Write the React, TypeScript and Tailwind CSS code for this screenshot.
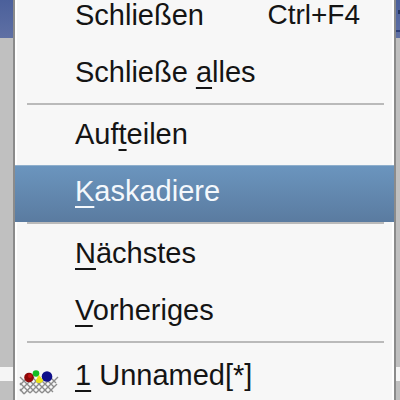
import type { ReactNode } from "react";
import clsx from "clsx";

function Key({ children }: { children: ReactNode }) {
    return (
        <span className="underline decoration-2 underline-offset-[5px] [text-decoration-skip-ink:none]">
            {children}
        </span>
    );
}

function BasketIcon() {
    return (
        <svg viewBox="0 0 40 28" className="w-10 h-7 mt-4" aria-hidden="true">
            <g fill="none" stroke="#8c8c8c" strokeWidth="1.4">
                <path d="M1 8L17 24M7 8L23 24M13 8L29 24M19 8L34 23M25 8L35 18M31 8L37 14M1 14L11 24M1 20L5 25" />
                <path d="M39 8L23 24M33 8L17 24M27 8L11 24M21 8L5 25M15 8L1 22M9 8L1 16M38 15L29 24" />
            </g>
            <circle cx="10" cy="8.5" r="4.8" fill="#8f0808" />
            <circle cx="11" cy="7" r="2" fill="#c51515" />
            <circle cx="28" cy="7.5" r="5.3" fill="#10108a" />
            <circle cx="17" cy="4.5" r="3.3" fill="#14bd22" />
            <path d="M20 6L24 11Q24 14 20 14Q16 14 17 11Z" fill="#e9e315" />
        </svg>
    );
}

interface ItemProps {
    children: ReactNode;
    shortcut?: string;
    icon?: ReactNode;
    active?: boolean;
    first?: boolean;
}

function Item({ children, shortcut, icon, active, first }: ItemProps) {
    return (
        <button
            type="button"
            role="menuitem"
            className={clsx(
                "flex w-full items-center pr-8 text-left whitespace-pre",
                first ? "h-[46px] pb-4" : "pb-[5px]",
                !first && (icon ? "h-[63px]" : "h-[57px]"),
                active
                    ? "border-t border-[#8fafcc] bg-linear-to-b from-[#6b95be] to-[#5a7ba0] text-[#f4f8fc]"
                    : "border-x-2 border-white text-[#141414]"
            )}
        >
            <span className={clsx("flex shrink-0", active ? "w-[60px] pl-1" : "w-[58px] pl-[2px]")}>{icon}</span>
            <span className="flex-1">{children}</span>
            {shortcut && <span className="text-[28px]">{shortcut}</span>}
        </button>
    );
}

function Separator() {
    return (
        <div role="separator" className="h-[5px] border-x-2 border-white pl-[10px] pr-2">
            <div className="h-[2px] bg-[#bababa]" />
        </div>
    );
}

export default function App() {
    return (
        <div className="relative flex h-screen flex-col overflow-hidden bg-[#c0c0c0] font-['Liberation_Sans',Arial,sans-serif] text-[29px] leading-none">
            {/* Window behind the menu */}
            <div className="flex h-[38px] shrink-0 flex-col items-end justify-between bg-linear-to-b from-[#4b609b] to-[#5f70a4] pt-[10px] pb-[6px]">
                <div className="h-1 w-[2px] bg-[#26365f]" />
                <div className="h-[2px] w-1 bg-[#2c3e78]" />
            </div>
            <div className="flex-1" />
            <div className="h-[14px] shrink-0 bg-[#f5f5f5]" />
            <div className="h-[19px] shrink-0" />

            <div role="menu" className="absolute top-0 left-[13px] right-1 border-x-2 border-[#8b8b8b] bg-[#f7f7f7]">
                <Item first shortcut="Ctrl+F4">Schließen</Item>
                <Item>Schließe <Key>a</Key>lles</Item>
                <Separator />
                <Item>Auf<Key>t</Key>eilen</Item>
                <Item active><Key>K</Key>askadiere</Item>
                <Separator />
                <Item><Key>N</Key>ächstes</Item>
                <Item><Key>V</Key>orheriges</Item>
                <Separator />
                <Item icon={<BasketIcon />}><Key>1</Key> Unnamed[*]</Item>
            </div>
        </div>
    );
}
